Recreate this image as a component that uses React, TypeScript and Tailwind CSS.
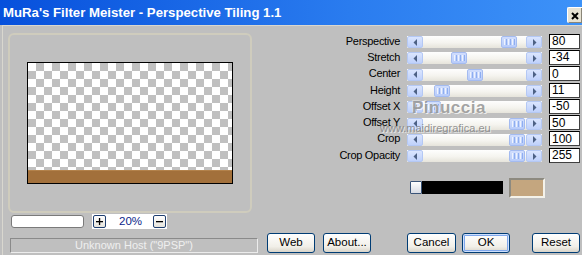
import React from "react";

const rows = [
  { label: "Perspective", value: "80", pos: 78 },
  { label: "Stretch", value: "-34", pos: 28 },
  { label: "Center", value: "0", pos: 44 },
  { label: "Height", value: "11", pos: 11 },
  { label: "Offset X", value: "-50", pos: 2 },
  { label: "Offset Y", value: "50", pos: 86 },
  { label: "Crop", value: "100", pos: 86 },
  { label: "Crop Opacity", value: "255", pos: 86 },
];

function Arrow({ dir }: { dir: "left" | "right" }) {
  return (
    <div className="flex h-[12px] w-[16px] items-center justify-center rounded-[2px] border border-[#b4c8f4] bg-[linear-gradient(to_bottom,#dae5fe,#bfd1fb)]">
      <svg width="5" height="7" viewBox="0 0 5 7">
        {dir === "left" ? (
          <polygon points="4,0 4,7 0.5,3.5" fill="#4d6185" />
        ) : (
          <polygon points="1,0 1,7 4.5,3.5" fill="#4d6185" />
        )}
      </svg>
    </div>
  );
}

function Thumb({ pos }: { pos: number }) {
  return (
    <div
      className="flex h-[12px] w-[16px] items-center justify-center gap-[1px] rounded-[2px] border border-[#a4bbf0] bg-[linear-gradient(to_bottom,#d0ddfd,#b8ccfa)]"
      style={{ marginLeft: pos }}
    >
      <span className="h-[6px] w-[1px] bg-[#eef3fe]" />
      <span className="h-[6px] w-[1px] bg-[#8eaef0]" />
      <span className="h-[6px] w-[1px] bg-[#eef3fe]" />
      <span className="h-[6px] w-[1px] bg-[#8eaef0]" />
      <span className="h-[6px] w-[1px] bg-[#eef3fe]" />
      <span className="h-[6px] w-[1px] bg-[#8eaef0]" />
    </div>
  );
}

function Slider({ label, value, pos }: { label: string; value: string; pos: number }) {
  return (
    <div className="flex h-[16.3px] items-center justify-end pr-[2px]">
      <span className="text-[11px] leading-none tracking-[-0.3px] text-black">{label}</span>
      <div className="ml-[7px] mt-[2px] flex h-[12px] w-[135px] bg-[linear-gradient(to_bottom,#fefefe,#f5f4ef_55%,#e6e4db)]">
        <Arrow dir="left" />
        <div className="flex flex-1 items-center">
          <Thumb pos={pos} />
        </div>
        <Arrow dir="right" />
      </div>
      <div className="ml-[7px] flex h-[15px] w-[31px] items-center border border-t-black border-l-black border-b-[#404040] border-r-[#404040] bg-white pl-[2px] text-[12px] leading-none text-black">
        {value}
      </div>
    </div>
  );
}

function XpButton({ children, def = false, w = "w-[48px]" }: { children: React.ReactNode; def?: boolean; w?: string }) {
  return (
    <div
      className={`flex h-[20px] ${w} items-center justify-center rounded-[3px] border border-[#003c74] bg-[linear-gradient(to_bottom,#ffffff,#f1efe8_70%,#d9d4c9)] text-[11.5px] leading-none text-black ${
        def ? "shadow-[inset_0_0_0_1px_#cee0fc,inset_0_0_0_2px_#7fa7ec]" : ""
      }`}
    >
      {children}
    </div>
  );
}

function TinyBtn({ minus = false }: { minus?: boolean }) {
  return (
    <div className="flex h-[13px] w-[13px] items-center justify-center rounded-[2px] border border-[#1f3f70] bg-[linear-gradient(to_bottom,#ffffff,#e6e4dc)]">
      <svg width="7" height="7" viewBox="0 0 7 7">
        <rect x="0" y="3" width="7" height="1.3" fill="#000" />
        {!minus && <rect x="2.9" y="0" width="1.3" height="7" fill="#000" />}
      </svg>
    </div>
  );
}

export default function App() {
  return (
    <div
      className="relative flex h-[255px] w-[582px] flex-col overflow-hidden bg-[#bfbfbf]"
      style={{ fontFamily: '"Liberation Sans", Arial, sans-serif' }}
    >
      {/* Title bar */}
      <div className="flex h-[25px] shrink-0 items-start justify-between bg-[linear-gradient(to_right,#0650dc,#2a7cef_60%,#3d92f8)]">
        <span className="mt-[5px] pl-[3px] text-[13.2px] font-bold leading-[15px] text-white">
          MuRa's Filter Meister - Perspective Tiling 1.1
        </span>
        <div className="mt-[7px] flex h-[16px] w-[15px] items-center justify-center rounded-l-[2px] border-l border-t border-white bg-[#e6e2d3] shadow-[inset_-1px_-1px_0_#8a8678]">
          <svg width="8" height="8" viewBox="0 0 8 8">
            <path d="M1 1 L7 7 M7 1 L1 7" stroke="#000" strokeWidth="2" />
          </svg>
        </div>
      </div>

      {/* Body */}
      <div className="flex flex-1 pl-[2px]">
        <div className="flex flex-1 border-l border-t border-[#d9d7cf]">
          {/* Left column */}
          <div className="flex w-[255px] flex-col pl-[5px]">
            <div className="mt-[7px] flex h-[180px] w-[244px] justify-center rounded-[6px] border-2 border-[#cfccbd] pt-[27px]">
              <div className="flex h-[122px] w-[206px] flex-col border border-black">
                <div className="flex-1 bg-[conic-gradient(#c0c0c0_25%,#ffffff_0_50%,#c0c0c0_0_75%,#ffffff_0)] bg-[length:16px_16px]" />
                <div className="h-[13px] bg-[#a2703b] shadow-[inset_0_1px_0_#b3824b]" />
              </div>
            </div>
            <div className="mt-[1px] flex h-[15px] items-center">
              <div className="ml-[3px] h-[13px] w-[73px] rounded-[3px] border border-[#7a7a7a] bg-white" />
              <div className="ml-[8px] flex h-[15px] w-[75px] items-center bg-white pl-[1px]">
                <TinyBtn />
                <span className="ml-[13px] w-[21px] text-[11.5px] leading-none text-[#0b1f8a]">20%</span>
                <div className="ml-[13px]">
                  <TinyBtn minus />
                </div>
              </div>
            </div>
            <div className="ml-[2px] mt-[9px] flex h-[15px] w-[248px] items-center justify-center border border-t-[#8a8a8a] border-l-[#8a8a8a] border-b-[#ececec] border-r-[#ececec] text-[11px] leading-none text-[#efefef]">
              Unknown Host ("9PSP")
            </div>
          </div>

          {/* Right part */}
          <div className="flex flex-1 flex-col pb-[2px] pt-[7px]">
            <div className="flex flex-col">
              {rows.map((r) => (
                <Slider key={r.label} {...r} />
              ))}
            </div>
            <div className="mt-[14.6px] flex items-center pl-[152px]">
              <div className="h-[13px] w-[12px] rounded-[1px] border border-[#3a5478] bg-[linear-gradient(to_bottom,#ffffff,#d7dbe3)]" />
              <div className="h-[13px] w-[81px] bg-black" />
              <div className="ml-[6px] h-[20px] w-[36px] border-2 border-t-[#8d8a80] border-l-[#8d8a80] border-b-[#f4f2ea] border-r-[#f4f2ea] bg-[#c4a67f]" />
            </div>
            <div className="mt-auto flex items-center pl-[9px]">
              <XpButton>Web</XpButton>
              <div className="ml-[8px]">
                <XpButton>About...</XpButton>
              </div>
              <div className="ml-[36px]">
                <XpButton w="w-[49px]">Cancel</XpButton>
              </div>
              <div className="ml-[6px]">
                <XpButton def>OK</XpButton>
              </div>
              <div className="ml-[22px]">
                <XpButton>Reset</XpButton>
              </div>
            </div>
          </div>
        </div>
      </div>

      {/* Watermark */}
      <div className="pointer-events-none absolute left-[412px] top-[99px] text-[17px] font-bold leading-none tracking-[0.5px] text-[#8c8c8c]/80 [text-shadow:1px_1px_0_rgba(255,255,255,0.7),-1px_-1px_0_rgba(255,255,255,0.4)]">
        Pinuccia
      </div>
      <div className="pointer-events-none absolute left-[380px] top-[123px] text-[11px] leading-none text-[#7a7a7a]/80 [text-shadow:1px_1px_0_rgba(255,255,255,0.6)]">
        www.maidiregrafica.eu
      </div>
    </div>
  );
}
